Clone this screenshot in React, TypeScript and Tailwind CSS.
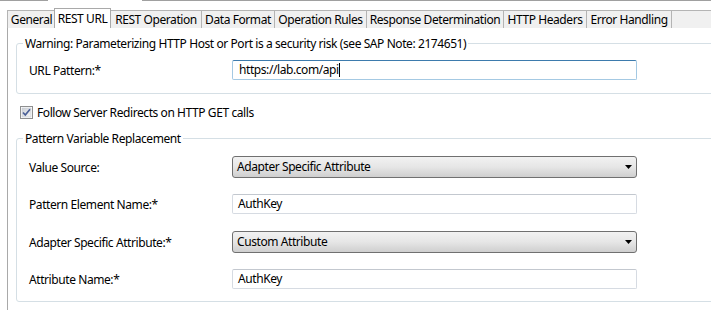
const tabs = [
  { label: "General", w: "w-[48px]" },
  { label: "REST URL", w: "w-[57px]", active: true },
  { label: "REST Operation", w: "w-[91px]" },
  { label: "Data Format", w: "w-[73px]" },
  { label: "Operation Rules", w: "w-[92px]" },
  { label: "Response Determination", w: "w-[137px]" },
  { label: "HTTP Headers", w: "w-[83px]" },
  { label: "Error Handling", w: "w-[85px]" },
];

const Label = ({ children }: { children: React.ReactNode }) => (
  <div className="w-[203px] shrink-0 leading-[15px]">{children}</div>
);

const TextBox = ({ value }: { value: string }) => (
  <div className="w-[405px] h-[20px] flex items-center pl-[5px] border border-[#d6dbe2] border-t-[#c3c8cf] rounded-[2px] bg-white">
    {value}
  </div>
);

const Combo = ({ value }: { value: string }) => (
  <div className="w-[405px] h-[22px] flex items-center justify-between pl-[4px] pr-[4px] border border-[#707070] rounded-[3px] bg-gradient-to-b from-[#f2f2f2] via-[#e6e6e6] to-[#cfcfcf]">
    <span>{value}</span>
    <svg width="7" height="4" viewBox="0 0 7 4">
      <path d="M0 0 H7 L3.5 4 Z" fill="#000" />
    </svg>
  </div>
);

const Group = ({
  title,
  className,
  children,
}: {
  title: string;
  className?: string;
  children: React.ReactNode;
}) => (
  <div className={`relative w-[720px] border border-[#d5dfe5] rounded-[3px] ${className ?? ""}`}>
    <span className="absolute -top-[8px] left-[6px] px-[2px] bg-white leading-[15px] whitespace-nowrap">{title}</span>
    {children}
  </div>
);

export default function App() {
  return (
    <div className="w-[711px] h-[310px] overflow-hidden bg-white text-black text-[12px] tracking-[-0.42px] font-['Segoe_UI','Noto_Sans',sans-serif]">
      {/* strip left over from the window above */}
      <div className="flex h-px">
        <div className="w-[48px] bg-[#a0a0a0]" />
        <div className="w-[94px]" />
        <div className="flex-1 bg-[#a0a0a0]" />
      </div>

      {/* tab bar */}
      <div className="mt-[7px] flex items-end h-[20px] pl-[7px]">
        {tabs.map((t) =>
          t.active ? (
            <div
              key={t.label}
              className={`${t.w} h-[20px] bg-white border-l border-t border-r border-[#a9a9a9] flex items-center justify-center whitespace-nowrap -mx-px z-10`}
            >
              {t.label}
            </div>
          ) : (
            <div
              key={t.label}
              className={`${t.w} h-[18px] bg-[#f0f0f0] border-l border-t border-[#b4b4b4] flex items-center justify-center whitespace-nowrap`}
            >
              {t.label}
            </div>
          )
        )}
        <div className="flex-1 h-[18px] bg-[#f0f0f0] border-l border-t border-[#b4b4b4]" />
      </div>

      {/* panel */}
      <div className="ml-[7px] h-[282px] border-l border-[#a9a9a9] pl-[8px] pt-[15px]">
        <Group title="Warning: Parameterizing HTTP Host or Port is a security risk (see SAP Note: 2174651)">
          <div className="flex items-center pl-[12px] pt-[16px] pb-[13px]">
            <Label>URL Pattern:*</Label>
            <div className="w-[405px] h-[20px] flex items-center pl-[6px] border border-[#a4c9e3] border-t-[#3d7bad] rounded-[2px] bg-white">
              https://lab.com/api
              <span className="inline-block w-px h-[14px] bg-black" />
            </div>
          </div>
        </Group>

        <div className="flex items-center gap-[4px] mt-[11px] ml-[4px] h-[14px]">
          <svg width="13" height="13" viewBox="0 0 13 13">
            <defs>
              <linearGradient id="cb" x1="0" y1="0" x2="1" y2="1">
                <stop offset="0" stopColor="#cbcfd5" />
                <stop offset="1" stopColor="#f6f6f6" />
              </linearGradient>
            </defs>
            <rect x="0.5" y="0.5" width="12" height="12" fill="#fff" stroke="#8e8f8f" />
            <rect x="2" y="2" width="9" height="9" fill="url(#cb)" stroke="#c4c8cf" strokeWidth="0.6" />
            <path d="M3 6.5 L5.3 9 L10 3.3" fill="none" stroke="#4a5f97" strokeWidth="1.7" />
          </svg>
          <span className="leading-[15px]">Follow Server Redirects on HTTP GET calls</span>
        </div>

        <Group title="Pattern Variable Replacement" className="mt-[19px]">
          <div className="flex flex-col pl-[12px] pt-[17px] pb-[12px]">
            <div className="flex items-center">
              <Label>Value Source:</Label>
              <Combo value="Adapter Specific Attribute" />
            </div>
            <div className="flex items-center mt-[16px]">
              <Label>Pattern Element Name:*</Label>
              <TextBox value="AuthKey" />
            </div>
            <div className="flex items-center mt-[17px]">
              <Label>Adapter Specific Attribute:*</Label>
              <Combo value="Custom Attribute" />
            </div>
            <div className="flex items-center mt-[16px]">
              <Label>Attribute Name:*</Label>
              <TextBox value="AuthKey" />
            </div>
          </div>
        </Group>
      </div>
    </div>
  );
}
